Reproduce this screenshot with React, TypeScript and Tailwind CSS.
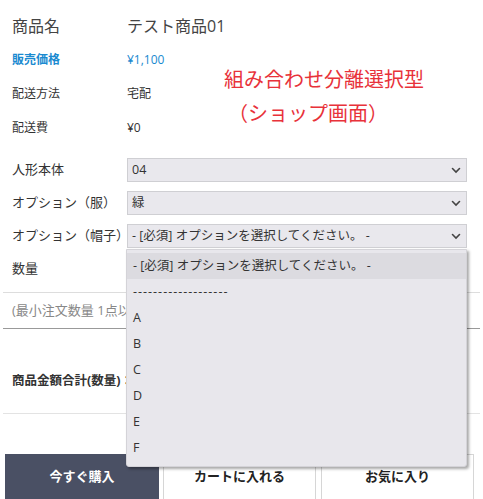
import React from "react";

const font = {
  fontFamily: '"Open Sans", "Noto Sans CJK JP", sans-serif',
};

function Chevron() {
  return (
    <svg className="size-[10px] text-[#444]" viewBox="0 0 10 10" fill="none">
      <path d="M1.5 3.5 5 7l3.5-3.5" stroke="currentColor" strokeWidth={1.6} strokeLinecap="round" />
    </svg>
  );
}

function SelectRow({ label, value }: { label: string; value: string }) {
  return (
    <div className="flex h-[33px] items-start">
      <div className="flex h-[24px] w-[115px] items-center text-[13px] text-[#333]">{label}</div>
      <div className="flex h-[24px] w-[340px] items-center justify-between border border-[#cfcfd3] bg-[#e9e8ed] pl-[4px] pr-[5px] text-[12.5px] text-[#333]">
        <span>{value}</span>
        <Chevron />
      </div>
    </div>
  );
}

const options = ["-------------------", "A", "B", "C", "D", "E", "F"];

export default function App() {
  return (
    <div className="relative h-[499px] w-[483px] overflow-hidden bg-white" style={font}>
      {/* 商品情報 */}
      <div className="px-[12px] pt-[8px]">
        <div className="flex h-[35px] items-center text-[16px] text-[#444]">
          <div className="w-[115px]">商品名</div>
          <div>テスト商品01</div>
        </div>
        <div className="flex">
          <div className="w-[212px]">
            <div className="flex h-[34px] items-center text-[12px] text-[#1a8ad0]">
              <div className="w-[115px] font-bold">販売価格</div>
              <div>¥1,100</div>
            </div>
            <div className="flex h-[34px] items-center text-[12px] text-[#333]">
              <div className="w-[115px]">配送方法</div>
              <div>宅配</div>
            </div>
            <div className="flex h-[33px] items-center text-[12px] text-[#333]">
              <div className="w-[115px]">配送費</div>
              <div>¥0</div>
            </div>
          </div>
          <div className="pt-[20px] text-[20px] leading-[34px] text-[#e8323a]">
            <div>組み合わせ分離選択型</div>
            <div className="pl-[4px]">（ショップ画面）</div>
          </div>
        </div>
      </div>

      {/* オプション */}
      <div className="px-[12px] pt-[14px]">
        <SelectRow label="人形本体" value="04" />
        <SelectRow label="オプション（服）" value="緑" />
        <SelectRow label="オプション（帽子）" value="- [必須] オプションを選択してください。 -" />
        <div className="flex h-[24px] items-center text-[13px] text-[#333]">数量</div>
      </div>

      <div className="mx-[3px] mt-[11px] border-t border-[#ddd]" />
      <div className="flex h-[35px] items-center whitespace-nowrap px-[12px] text-[13px] text-[#888]">
        (最小注文数量 1点以上)
      </div>
      <div className="mx-[3px] border-t border-[#999]" />
      <div className="flex h-[84px] items-end whitespace-nowrap px-[12px] pb-[22px] text-[12.5px] font-bold text-[#333]">
        商品金額合計(数量)：
      </div>
      <div className="mx-[3px] border-t border-[#e3e3e3]" />

      {/* ボタン */}
      <div className="mt-[40px] flex gap-[4px] px-[5px]">
        <button className="h-[46px] w-[154px] bg-[#4a5064] text-[13px] font-bold text-white">今すぐ購入</button>
        <button className="h-[46px] w-[153px] border border-[#d6d6d6] bg-white text-[13px] font-bold text-[#222]">カートに入れる</button>
        <button className="ml-[1px] h-[46px] w-[153px] border border-[#d6d6d6] bg-white text-[13px] font-bold text-[#222]">お気に入り</button>
      </div>

      {/* ドロップダウン */}
      <div className="absolute left-[126px] top-[249px] w-[341px] rounded-b-[3px] border border-[#d4d3d8] bg-[#e8e7ec] pb-[5px] pt-[3px] shadow-[2px_2px_3px_rgba(0,0,0,0.35)]">
        <div className="flex h-[26px] items-center bg-[#dcdbe0] px-[6px] text-[12.5px] text-[#333]">
          - [必須] オプションを選択してください。 -
        </div>
        {options.map((o, i) => (
          <div
            key={o}
            className={
              i === 0
                ? "flex h-[26px] items-center px-[6px] text-[12.5px] tracking-[1px] text-[#333]"
                : "flex h-[26px] items-center px-[6px] text-[12.5px] text-[#333]"
            }
          >
            {o}
          </div>
        ))}
      </div>
    </div>
  );
}
